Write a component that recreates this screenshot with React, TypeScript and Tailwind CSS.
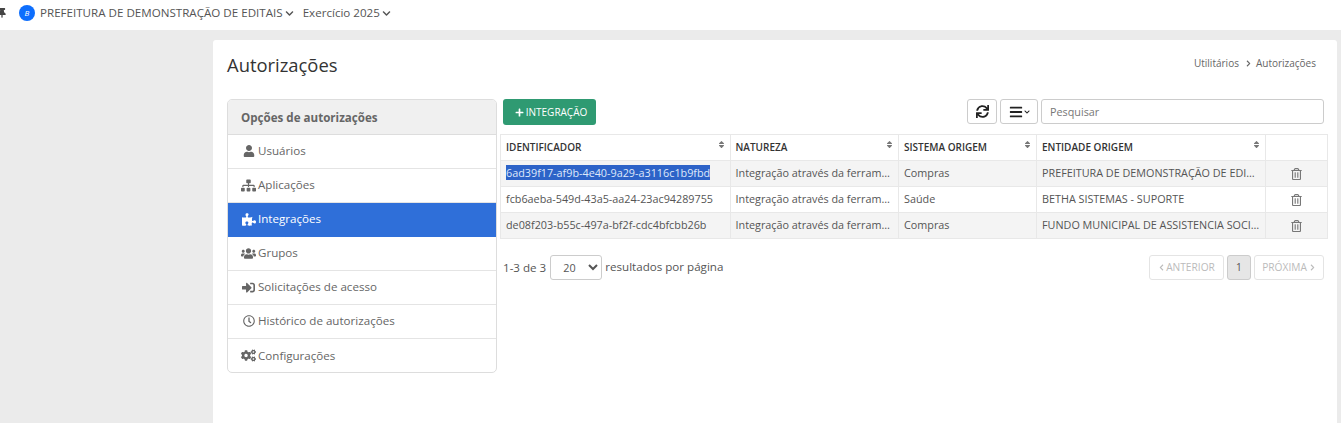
import { FaThumbtack, FaChevronDown, FaChevronLeft, FaChevronRight, FaUser, FaSitemap, FaPuzzlePiece, FaUsers, FaSignInAlt, FaRegClock, FaCogs, FaPlus, FaSync, FaBars, FaSort, FaRegTrashAlt } from "react-icons/fa";

const menu = [
  { label: "Usuários", icon: FaUser, size: "h-[12px] w-[12px]" },
  { label: "Aplicações", icon: FaSitemap, size: "h-[13px] w-[15px]" },
  { label: "Integrações", icon: FaPuzzlePiece, size: "h-[13px] w-[14px]", active: true },
  { label: "Grupos", icon: FaUsers, size: "h-[13px] w-[15px]" },
  { label: "Solicitações de acesso", icon: FaSignInAlt, size: "h-[13px] w-[13px]" },
  { label: "Histórico de autorizações", icon: FaRegClock, size: "h-[12px] w-[12px]" },
  { label: "Configurações", icon: FaCogs, size: "h-[13px] w-[15px]" },
];

const columns = [
  { label: "IDENTIFICADOR", width: "w-[229.5px]" },
  { label: "NATUREZA", width: "w-[168.5px]" },
  { label: "SISTEMA ORIGEM", width: "w-[138px]" },
  { label: "ENTIDADE ORIGEM", width: "w-[229px]" },
];

const rows = [
  { id: "6ad39f17-af9b-4e40-9a29-a3116c1b9fbd", sistema: "Compras", entidade: "PREFEITURA DE DEMONSTRAÇÃO DE EDITAIS", selected: true },
  { id: "fcb6aeba-549d-43a5-aa24-23ac94289755", sistema: "Saúde", entidade: "BETHA SISTEMAS - SUPORTE" },
  { id: "de08f203-b55c-497a-bf2f-cdc4bfcbb26b", sistema: "Compras", entidade: "FUNDO MUNICIPAL DE ASSISTENCIA SOCIAL" },
];

export default function App() {
  return (
    <div className="h-[423px] overflow-hidden bg-[#ebebeb] font-['Open_Sans',sans-serif] text-[#555]">
      <header className="flex h-[30px] items-center bg-white pb-[4px] text-[11.6px]">
        <FaThumbtack className="ml-[-3px] h-[10px] w-[10px] text-[#444]" />
        <span className="ml-[12px] flex h-[16px] w-[16px] items-center justify-center rounded-full bg-[#0d6efd] text-[8px] italic text-white">B</span>
        <span className="ml-[5px]">PREFEITURA DE DEMONSTRAÇÃO DE EDITAIS</span>
        <FaChevronDown className="ml-[2px] h-[9px] w-[9px]" />
        <span className="ml-[9px]">Exercício 2025</span>
        <FaChevronDown className="ml-[2px] h-[9px] w-[9px]" />
      </header>

      <main className="ml-[213px] mr-[4px] mt-[10px] h-[383px] rounded-t-[3px] bg-white pl-[14px] pr-[9px]">
        <div className="flex h-[59px] items-start justify-between">
          <h1 className="mt-[10px] text-[18.4px] leading-[30px] text-[#333]">Autorizações</h1>
          <div className="mr-[12px] mt-[16px] flex items-center text-[10px] leading-[14px] text-[#666]">
            <span>Utilitários</span>
            <FaChevronRight className="ml-[6px] mr-[4px] h-[7px] w-[7px]" />
            <span>Autorizações</span>
          </div>
        </div>

        <div className="flex">
          <aside className="h-[274px] w-[270px] shrink-0 overflow-hidden rounded-[5px] border border-[#ddd]">
            <div className="flex h-[35px] items-center border-b border-[#ddd] bg-[#f0f0f0] pl-[13px] pt-[1px] text-[11.6px] font-bold text-[#666]">Opções de autorizações</div>
            {menu.map((item) => (
              <div key={item.label} className={`flex h-[34px] items-center border-b pl-[13px] pb-[1px] text-[11.6px] last:border-b-0 ${item.active ? "border-[#2f6fd9] bg-[#2f6fd9] text-white" : "border-[#e4e4e4] text-[#666]"}`}>
                <span className="flex w-[17px] justify-center pr-[2px]">
                  <item.icon className={item.size} />
                </span>
                <span>{item.label}</span>
              </div>
            ))}
          </aside>

          <section className="ml-[3px] min-w-0 flex-1">
            <div className="flex h-[35px] items-start justify-between pl-[3px] pr-[4px]">
              <button className="flex h-[26px] w-[93px] items-center justify-center rounded-[3px] bg-[#2f9a72] pl-[3px] text-[10px] text-white">
                <FaPlus className="mr-[2px] h-[9px] w-[9px]" />
                INTEGRAÇÃO
              </button>
              <div className="flex items-center">
                <button className="flex h-[25px] w-[30px] items-center justify-center rounded-[3px] border border-[#ccc] text-[#222]">
                  <FaSync className="h-[13px] w-[13px]" />
                </button>
                <button className="ml-[3px] flex h-[25px] w-[38px] items-center justify-center rounded-[3px] border border-[#ccc] text-[#222]">
                  <FaBars className="h-[14px] w-[14px]" />
                  <FaChevronDown className="ml-[1px] h-[6px] w-[6px]" />
                </button>
                <input placeholder="Pesquisar" className="ml-[3px] h-[25px] w-[283px] rounded-[3px] border border-[#ccc] px-[8px] text-[10.8px] placeholder:text-[#777]" />
              </div>
            </div>

            <table className="w-[828px] table-fixed border-collapse text-[10.8px]">
              <thead>
                <tr className="h-[26px]">
                  {columns.map((col) => (
                    <th key={col.label} className={`${col.width} relative border border-[#e8e8e8] px-[5px] text-left text-[10px] font-semibold text-[#333]`}>
                      {col.label}
                      <FaSort className="absolute right-[4px] top-[5px] h-[9px] w-[9px] text-[#777]" />
                    </th>
                  ))}
                  <th className="border border-[#e8e8e8]"></th>
                </tr>
              </thead>
              <tbody>
                {rows.map((row, i) => (
                  <tr key={row.id} className={`h-[26px] ${i % 2 === 0 ? "bg-[#f4f4f4]" : "bg-white"}`}>
                    <td className="truncate border border-[#e8e8e8] px-[5px]">
                      <span className={row.selected ? "bg-[#2d63c8] text-[#dfe8fa]" : ""}>{row.id}</span>
                    </td>
                    <td className="truncate border border-[#e8e8e8] px-[5px]">Integração através da ferramenta</td>
                    <td className="truncate border border-[#e8e8e8] px-[5px]">{row.sistema}</td>
                    <td className="truncate border border-[#e8e8e8] px-[5px]">{row.entidade}</td>
                    <td className="border border-[#e8e8e8]">
                      <FaRegTrashAlt className="mx-auto h-[12px] w-[11px] text-[#777]" />
                    </td>
                  </tr>
                ))}
              </tbody>
            </table>

            <div className="mt-[16px] flex items-center justify-between pl-[3px] pr-[4px]">
              <div className="flex items-center text-[11.6px]">
                <span>1-3 de 3</span>
                <select defaultValue="20" className="ml-[4px] h-[25px] w-[52px] rounded-[3px] border border-[#ccc] bg-white pl-[8px] text-[10.8px]">
                  <option>20</option>
                </select>
                <span className="ml-[3px] pb-[1px]">resultados por página</span>
              </div>
              <div className="flex items-center text-[10.2px] text-[#bbb]">
                <button className="flex h-[25px] w-[75px] items-center justify-center rounded-[3px] border border-[#e4e4e4]">
                  <FaChevronLeft className="mr-[1px] h-[7px] w-[7px]" />
                  ANTERIOR
                </button>
                <button className="ml-[3px] h-[25px] w-[24px] rounded-[3px] border border-[#ccc] bg-[#e6e6e6] text-[#555]">1</button>
                <button className="ml-[3px] flex h-[25px] w-[70px] items-center justify-center rounded-[3px] border border-[#e4e4e4]">
                  PRÓXIMA
                  <FaChevronRight className="ml-[2px] h-[7px] w-[7px]" />
                </button>
              </div>
            </div>
          </section>
        </div>
      </main>
    </div>
  );
}
